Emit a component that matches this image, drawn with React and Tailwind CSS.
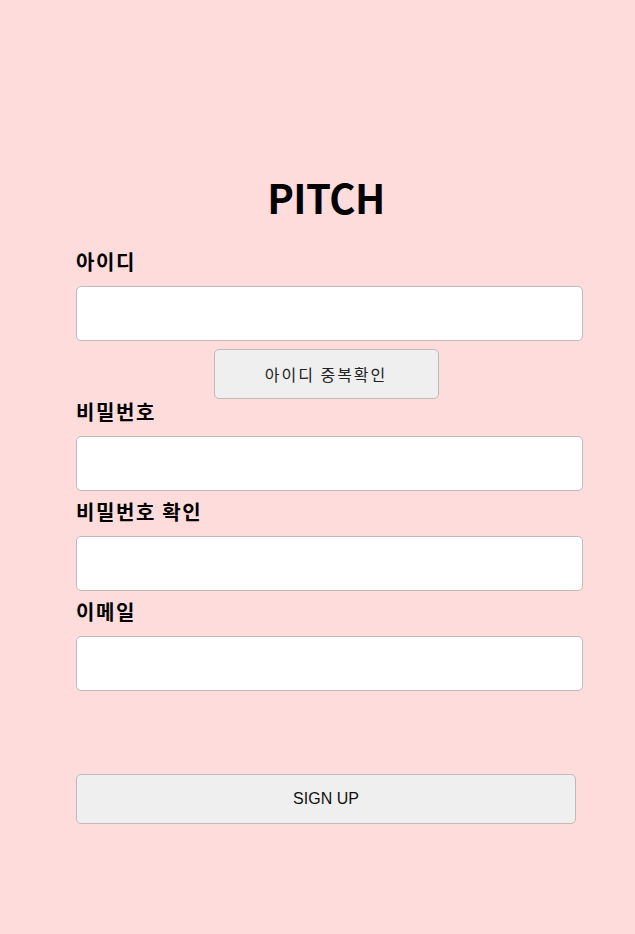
import React, { useState } from 'react';

// -----------------------------------------------------------------------------
// 회원가입 페이지
// -----------------------------------------------------------------------------
const Field = ({ label, type = 'text', value, onChange, className = '' }) => (
    <div className={className}>
        <label className="block text-[20px] leading-6 font-bold tracking-[1.6px] text-black mb-3">{label}</label>
        <input
            type={type}
            value={value}
            onChange={onChange}
            className="block w-[507px] h-[55px] bg-white border border-[#c2b9b9] rounded-[5px] px-2 text-base outline-none"
        />
    </div>
);

export default function App() {
    const [form, setForm] = useState({ id: '', pw: '', pw2: '', email: '' });
    const set = (k) => (e) => setForm({ ...form, [k]: e.target.value });

    return (
        <main
            className="min-h-screen w-full bg-[#ffdcdc] pt-[177px]"
            style={{ fontFamily: '"Noto Sans CJK KR", "Noto Sans", sans-serif' }}
        >
            <div className="ml-[76px] w-[500px] flex flex-col">
                <h1 className="text-[40px] leading-10 font-bold tracking-[-0.5px] text-black text-center">PITCH</h1>

                <Field label="아이디" value={form.id} onChange={set('id')} className="mt-[33px]" />
                <button className="self-center mt-2 w-[225px] h-[50px] bg-[#efefef] border border-[#c2b9b9] rounded-[5px] text-base tracking-[2px] text-[#222]">
                    아이디 중복확인
                </button>

                <Field label="비밀번호" type="password" value={form.pw} onChange={set('pw')} className="mt-px" />
                <Field label="비밀번호 확인" type="password" value={form.pw2} onChange={set('pw2')} className="mt-[9px]" />
                <Field label="이메일" type="email" value={form.email} onChange={set('email')} className="mt-[9px]" />

                <button
                    className="mt-[83px] w-[500px] h-[50px] bg-[#efefef] border border-[#c2b9b9] rounded-[5px] text-base text-[#111]"
                    style={{ fontFamily: '"Liberation Sans", Arial, sans-serif' }}
                >
                    SIGN UP
                </button>
            </div>
        </main>
    );
}
